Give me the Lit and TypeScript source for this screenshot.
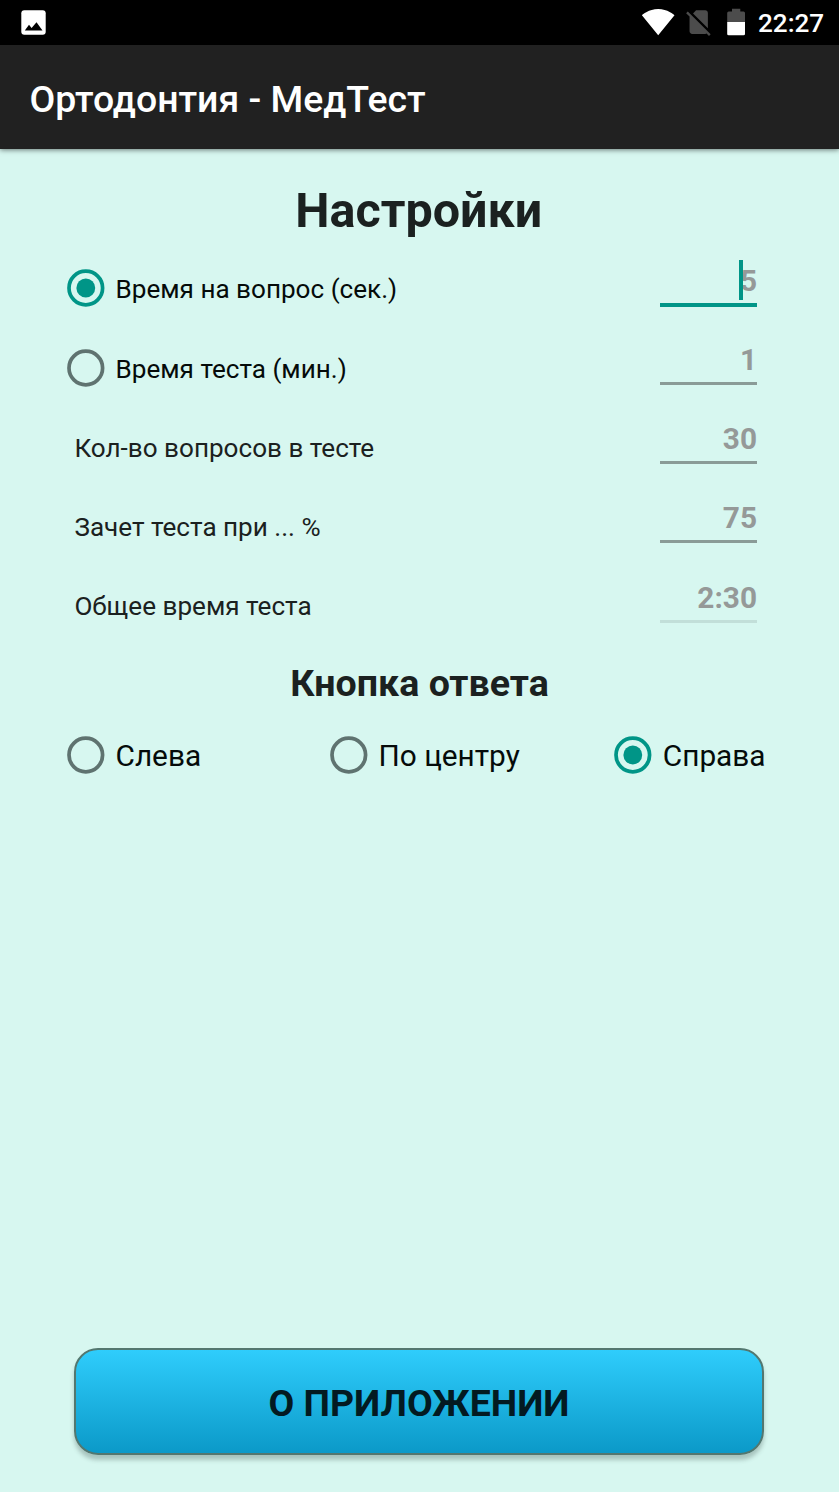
import { LitElement, html, css, svg } from "lit";
import { customElement, property } from "lit/decorators.js";
import { classMap } from "lit/directives/class-map.js";

@customElement("radio-option")
class RadioOption extends LitElement {
  @property() label = "";
  @property({ type: Boolean }) checked = false;
  @property({ type: Boolean }) small = false;

  static styles = css`
    :host { display: block; }
    .option { display: flex; align-items: center; gap: 11px; color: #050b0a; font-size: 29.8px; line-height: 38px; white-space: nowrap; }
    .text { padding-top: 2px; }
    .small { font-size: 26.1px; }
    .dial { display: block; width: 38px; height: 38px; color: #5f7370; }
    .on { color: #009587; }
  `;

  render() {
    return html`<div class=${classMap({ option: true, small: this.small })}>
      <svg class=${classMap({ dial: true, on: this.checked })} viewBox="0 0 38 38">
        <circle cx="18.8" cy="19" r="16.8" fill="none" stroke="currentColor" stroke-width="3.7" />
        ${this.checked ? svg`<circle cx="18.8" cy="19" r="9.4" fill="currentColor" />` : null}
      </svg>
      <span class="text">${this.label}</span>
    </div>`;
  }
}

@customElement("number-field")
class NumberField extends LitElement {
  @property() value = "";
  @property() mode = "";

  static styles = css`
    :host { display: block; }
    .field { box-sizing: border-box; width: 97px; height: 79.25px; padding-top: 14px; text-align: right; font-size: 29.8px; line-height: 36px; font-weight: 700; color: #959998; }
    .value { position: relative; display: block; height: 40px; }
    .line { height: 3px; background: #8a9b97; }
    .focused .line { height: 4px; background: #009587; }
    .disabled .line { background: #c2dfd9; }
    .caret { position: absolute; right: 14px; top: -3px; width: 4px; height: 40px; background: #009587; }
  `;

  render() {
    return html`<div class="field ${this.mode}">
      <span class="value">${this.value}${this.mode === "focused" ? html`<span class="caret"></span>` : null}</span>
      <div class="line"></div>
    </div>`;
  }
}

@customElement("app-root")
class AppRoot extends LitElement {
  static styles = css`
    :host { display: block; font-family: Roboto, sans-serif; }
    .screen { display: flex; flex-direction: column; height: 1492px; overflow: hidden; background: #d7f7f0; }
    .status { display: flex; align-items: flex-start; justify-content: space-between; height: 45px; flex: none; background: #000; color: #fff; }
    .status svg { display: block; height: 45px; }
    .indicators { display: flex; }
    .clock { width: 81px; font-size: 26.1px; line-height: 47px; font-weight: 500; white-space: nowrap; }
    .bar { display: flex; align-items: center; box-sizing: border-box; height: 104px; flex: none; padding: 3px 29.5px 0; background: #212121; color: #fff; font-size: 37.4px; font-weight: 500; box-shadow: 0 1px 5px rgba(0, 0, 0, 0.5); }
    .settings { display: flex; flex-direction: column; padding: 0 82px 0 75px; }
    .heading { height: 99.5px; box-sizing: border-box; margin-right: -5.5px; padding-top: 31.5px; text-align: center; font-size: 48.5px; line-height: 60px; font-weight: 700; color: #1b2120; }
    .row { display: flex; justify-content: space-between; height: 79.25px; }
    .radio { margin-left: -8.5px; padding-top: 19.75px; }
    .label { padding-top: 22.75px; margin-left: -0.6px; font-size: 26.1px; line-height: 36px; color: #1b2120; }
    .subheading { padding-top: 15px; text-align: center; font-size: 37.6px; line-height: 46px; font-weight: 700; color: #1b2120; }
    .answers { display: grid; grid-template-columns: 263px 284.3px auto; padding: 29px 0 0 66.5px; }
    .footer { margin-top: auto; padding: 0 75px 37px 74px; }
    .about { display: block; box-sizing: border-box; width: 100%; height: 107px; padding: 2px 0 0; border: 2px solid #53776f; border-radius: 24px; background: linear-gradient(#2fcdfc, #0b99c8); box-shadow: 0 5px 4px rgba(60, 80, 75, 0.3); font: 700 37.4px Roboto, sans-serif; color: #031a21; }
  `;

  render() {
    return html`<div class="screen">
      <div class="status">
        <svg width="60" viewBox="0 0 60 45">
          <rect x="21.3" y="10.2" width="24.4" height="24.6" rx="3" fill="#fff" />
          <path d="M24.8 30.4L29 24.8L31.6 28L36.5 22.2L42.5 30.4Z" fill="#000" />
        </svg>
        <div class="indicators">
          <svg width="118" viewBox="640 0 118 45">
            <path d="M658.2 35.3L674.5 15.2C673.9 14.7 667.6 9 658.2 9S642.5 14.7 641.9 15.2Z" fill="#fff" />
            <path transform="translate(683 6.4) scale(1.31)" fill="#4c4c4c" d="M18.99 5c0-1.1-.89-2-1.99-2h-7L7.66 5.34 19 16.68zM3.65 3.88L2.38 5.15 5 7.77V19c0 1.1.9 2 2 2h10.01c.35 0 .67-.1.96-.26l1.88 1.88 1.27-1.27z" />
            <path d="M727.2 22V13Q727.2 11.5 728.7 11.5H732V8.8H740.3V11.5H743.5Q745 11.5 745 13V22Z" fill="#4c4c4c" />
            <path d="M727.2 22H745V34Q745 35.3 743.5 35.3H728.7Q727.2 35.3 727.2 34Z" fill="#fff" />
          </svg>
          <div class="clock">22:27</div>
        </div>
      </div>
      <div class="bar">Ортодонтия - МедТест</div>
      <div class="settings">
        <div class="heading">Настройки</div>
        <div class="row"><radio-option class="radio" small checked label="Время на вопрос (сек.)"></radio-option><number-field value="5" mode="focused"></number-field></div>
        <div class="row"><radio-option class="radio" small label="Время теста (мин.)"></radio-option><number-field value="1"></number-field></div>
        <div class="row"><div class="label">Кол-во вопросов в тесте</div><number-field value="30"></number-field></div>
        <div class="row"><div class="label">Зачет теста при ... %</div><number-field value="75"></number-field></div>
        <div class="row"><div class="label">Общее время теста</div><number-field value="2:30" mode="disabled"></number-field></div>
      </div>
      <div class="subheading">Кнопка ответа</div>
      <div class="answers">
        <radio-option label="Слева"></radio-option>
        <radio-option label="По центру"></radio-option>
        <radio-option checked label="Справа"></radio-option>
      </div>
      <div class="footer"><button class="about">О ПРИЛОЖЕНИИ</button></div>
    </div>`;
  }
}
